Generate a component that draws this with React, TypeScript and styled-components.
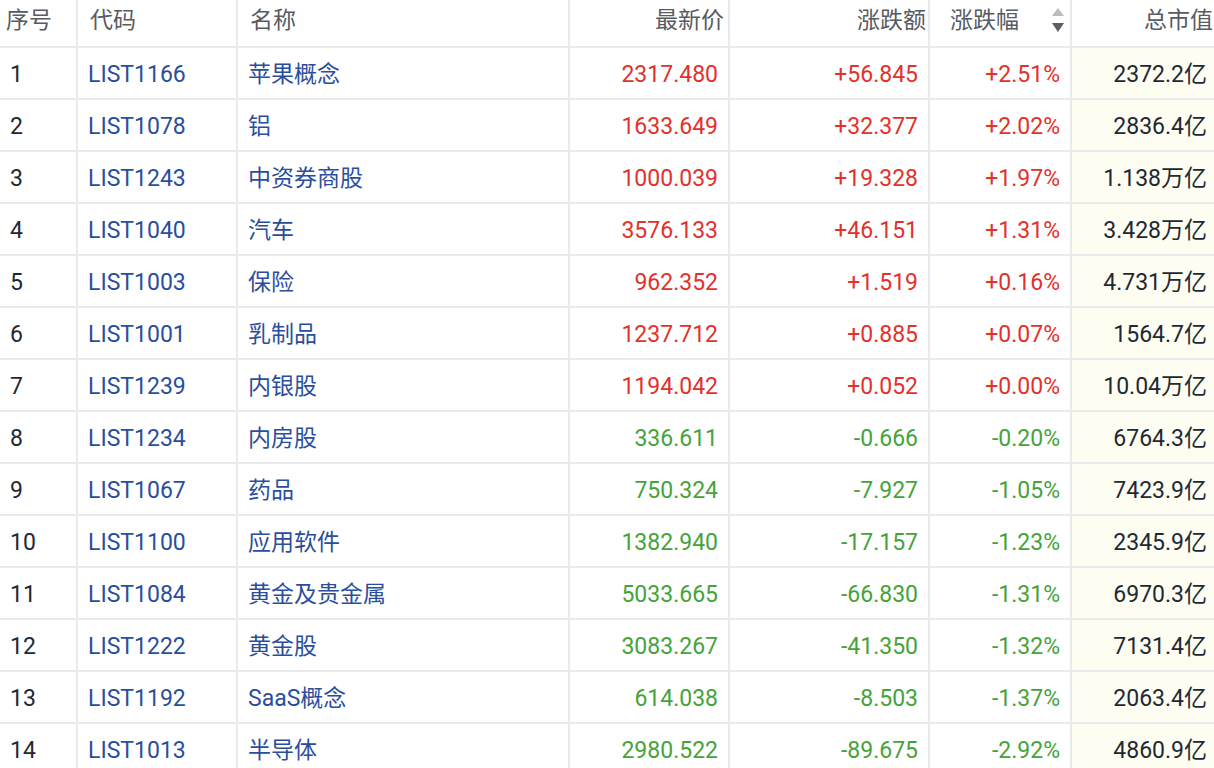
import React from 'react';
import styled, { createGlobalStyle, css } from 'styled-components';

const GlobalStyle = createGlobalStyle`
  html, body {
    margin: 0;
    padding: 0;
    background: #ffffff;
    overflow: hidden;
  }
  body {
    font-family: Roboto, "Noto Sans CJK SC", sans-serif;
  }
`;

type Align = 'left' | 'right';
type Tone = 'up' | 'down' | 'plain';

const Grid = styled.div`
  display: grid;
  grid-template-columns: 76px 158px 330px 158px 198px 140px 142px;
  grid-auto-rows: 50px;
  grid-template-rows: 46px;
  gap: 2px;
  width: 1216px;
  background: #e9eaec;
  font-size: 23px;
`;

const HeadCell = styled.div<{ $align: Align; $padL?: number; $padR?: number }>`
  display: flex;
  align-items: flex-start;
  justify-content: ${p => (p.$align === 'right' ? 'flex-end' : 'flex-start')};
  padding: 3px ${p => p.$padR ?? 3}px 0 ${p => p.$padL ?? 12}px;
  line-height: 30px;
  background: #ffffff;
  color: #575b63;
  font-family: "Noto Sans CJK SC", sans-serif;
  white-space: nowrap;
`;

const SortHead = styled(HeadCell)`
  justify-content: space-between;
  padding-left: 20px;
  padding-right: 6px;
`;

const SortIcon = styled.div`
  display: flex;
  flex-direction: column;
  gap: 7px;
  padding-top: 5px;
`;

const Arrow = styled.div<{ $dir: 'up' | 'down' }>`
  width: 0;
  height: 0;
  border-left: 6px solid transparent;
  border-right: 6px solid transparent;
  ${p =>
    p.$dir === 'up'
      ? css`border-bottom: 8px solid #b9bcc2;`
      : css`border-top: 9px solid #5a5e66;`}
`;

const toneColor: Record<Tone, string> = {
  up: '#e3312b',
  down: '#46a33a',
  plain: '#222833',
};

const Cell = styled.div<{ $align: Align; $tone?: Tone; $link?: boolean; $highlight?: boolean; $padR?: number }>`
  display: flex;
  align-items: center;
  justify-content: ${p => (p.$align === 'right' ? 'flex-end' : 'flex-start')};
  padding: 4px ${p => p.$padR ?? 10}px 0 10px;
  background: ${p => (p.$highlight ? '#fdfdf1' : '#ffffff')};
  color: ${p => (p.$link ? '#2a4e9d' : toneColor[p.$tone ?? 'plain'])};
  white-space: nowrap;
  line-height: 30px;
`;

type Row = [string, string, string, string, string, string];

const rows: Row[] = [
  ['LIST1166', '苹果概念', '2317.480', '+56.845', '+2.51%', '2372.2亿'],
  ['LIST1078', '铝', '1633.649', '+32.377', '+2.02%', '2836.4亿'],
  ['LIST1243', '中资券商股', '1000.039', '+19.328', '+1.97%', '1.138万亿'],
  ['LIST1040', '汽车', '3576.133', '+46.151', '+1.31%', '3.428万亿'],
  ['LIST1003', '保险', '962.352', '+1.519', '+0.16%', '4.731万亿'],
  ['LIST1001', '乳制品', '1237.712', '+0.885', '+0.07%', '1564.7亿'],
  ['LIST1239', '内银股', '1194.042', '+0.052', '+0.00%', '10.04万亿'],
  ['LIST1234', '内房股', '336.611', '-0.666', '-0.20%', '6764.3亿'],
  ['LIST1067', '药品', '750.324', '-7.927', '-1.05%', '7423.9亿'],
  ['LIST1100', '应用软件', '1382.940', '-17.157', '-1.23%', '2345.9亿'],
  ['LIST1084', '黄金及贵金属', '5033.665', '-66.830', '-1.31%', '6970.3亿'],
  ['LIST1222', '黄金股', '3083.267', '-41.350', '-1.32%', '7131.4亿'],
  ['LIST1192', 'SaaS概念', '614.038', '-8.503', '-1.37%', '2063.4亿'],
  ['LIST1013', '半导体', '2980.522', '-89.675', '-2.92%', '4860.9亿'],
];

export default function App() {
  return (
    <>
      <GlobalStyle />
      <Grid>
        <HeadCell $align="left" $padL={6}>序号</HeadCell>
        <HeadCell $align="left">代码</HeadCell>
        <HeadCell $align="left">名称</HeadCell>
        <HeadCell $align="right" $padR={4}>最新价</HeadCell>
        <HeadCell $align="right" $padR={2}>涨跌额</HeadCell>
        <SortHead $align="left">
          <span>涨跌幅</span>
          <SortIcon>
            <Arrow $dir="up" />
            <Arrow $dir="down" />
          </SortIcon>
        </SortHead>
        <HeadCell $align="right" $padR={1}>总市值</HeadCell>
        {rows.map((r, i) => {
          const tone: Tone = r[3].startsWith('-') ? 'down' : 'up';
          return (
            <React.Fragment key={r[0]}>
              <Cell $align="left">{i + 1}</Cell>
              <Cell $align="left" $link>{r[0]}</Cell>
              <Cell $align="left" $link>{r[1]}</Cell>
              <Cell $align="right" $tone={tone}>{r[2]}</Cell>
              <Cell $align="right" $tone={tone}>{r[3]}</Cell>
              <Cell $align="right" $tone={tone}>{r[4]}</Cell>
              <Cell $align="right" $highlight $padR={7}>{r[5]}</Cell>
            </React.Fragment>
          );
        })}
      </Grid>
    </>
  );
}
